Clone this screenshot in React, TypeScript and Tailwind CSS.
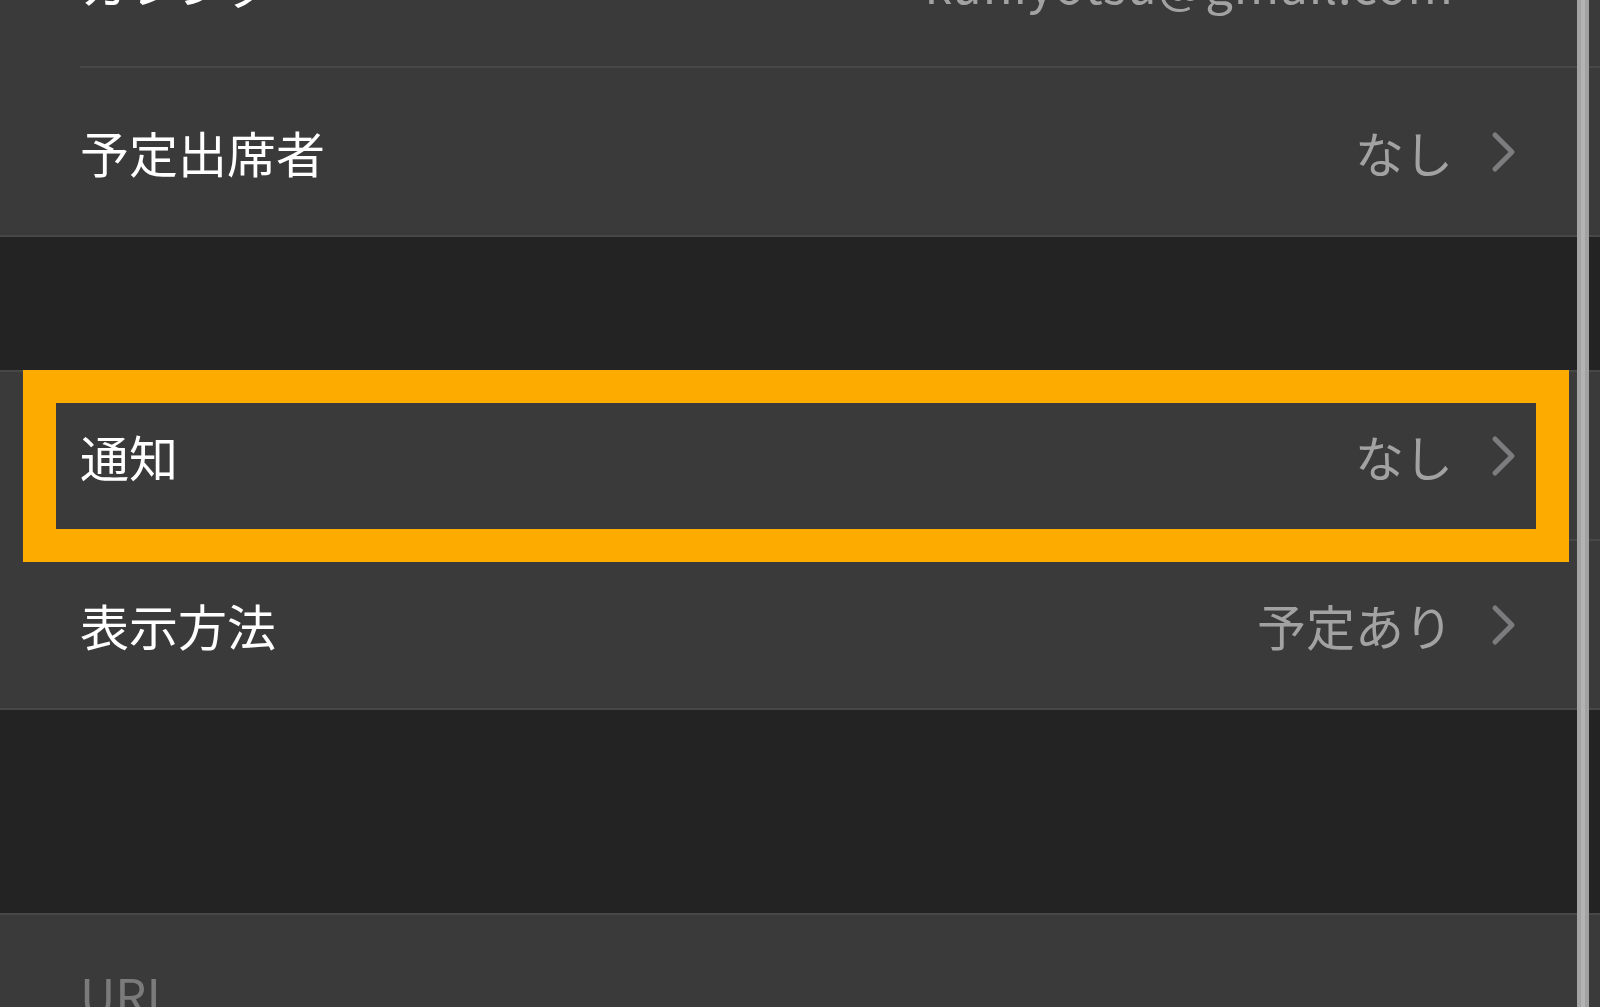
import { ReactNode } from "react";

const FONT = "font-['Noto_Sans_CJK_JP','Noto_Sans',sans-serif]";

function Chevron() {
  return (
    <svg width="26" height="42" viewBox="0 0 26 42" className="shrink-0">
      <polyline
        points="4,4 21,21 4,38"
        fill="none"
        stroke="#7c7c7e"
        strokeWidth="5"
        strokeLinecap="round"
        strokeLinejoin="round"
      />
    </svg>
  );
}

function Row({
  label,
  value,
  last,
  chevron = true,
}: {
  label: string;
  value?: string;
  last?: boolean;
  chevron?: boolean;
}) {
  return (
    <div
      className={`relative flex h-[167px] items-center gap-[38px] pl-[80px] ${chevron ? "pr-[83px]" : "pr-[146px]"}`}
    >
      <span className="flex-1 text-[49px] leading-none text-white">{label}</span>
      {value ? (
        <span className={`text-[49px] leading-none text-[#a2a2a2] ${chevron ? "" : "tracking-[1px]"}`}>
          {value}
        </span>
      ) : null}
      {chevron ? <Chevron /> : null}
      {!last ? <div className="absolute bottom-[-2px] left-[80px] right-0 h-[2px] bg-[#474747]" /> : null}
    </div>
  );
}

function Group({ children, className = "" }: { children: ReactNode; className?: string }) {
  return (
    <div className={`border-y-2 border-[#474747] bg-[#3a3a3a] ${className}`}>
      <div className="flex flex-col gap-[2px]">{children}</div>
    </div>
  );
}

export default function App() {
  return (
    <div className={`relative h-[1007px] w-[1600px] overflow-hidden bg-[#232323] ${FONT}`}>
      <div className="flex flex-col">
        <Group className="-mt-[101px] border-t-0">
          <Row label="カレンダー" value="kuniyotsu@gmail.com" chevron={false} />
          <Row label="予定出席者" value="なし" last />
        </Group>

        <div className="h-[133px]" />

        <Group>
          <Row label="通知" value="なし" />
          <Row label="表示方法" value="予定あり" last />
        </Group>

        <div className="h-[203px]" />

        <div className="h-[200px] border-t-2 border-[#474747] bg-[#3a3a3a] pl-[80px] pt-[54px]">
          <span className="text-[49px] leading-none text-[#7b7b7b]">URL</span>
        </div>
      </div>

      {/* highlight annotation */}
      <div className="absolute left-[23px] top-[370px] h-[192px] w-[1546px] border-[33px] border-[#feab00]" />

      {/* split-view divider */}
      <div className="absolute left-[1577px] top-0 h-full w-[12px] bg-[#a2a2a2]" />
      <div className="absolute left-[1581px] top-0 h-full w-[4px] bg-[#b3b3b3]" />
    </div>
  );
}
